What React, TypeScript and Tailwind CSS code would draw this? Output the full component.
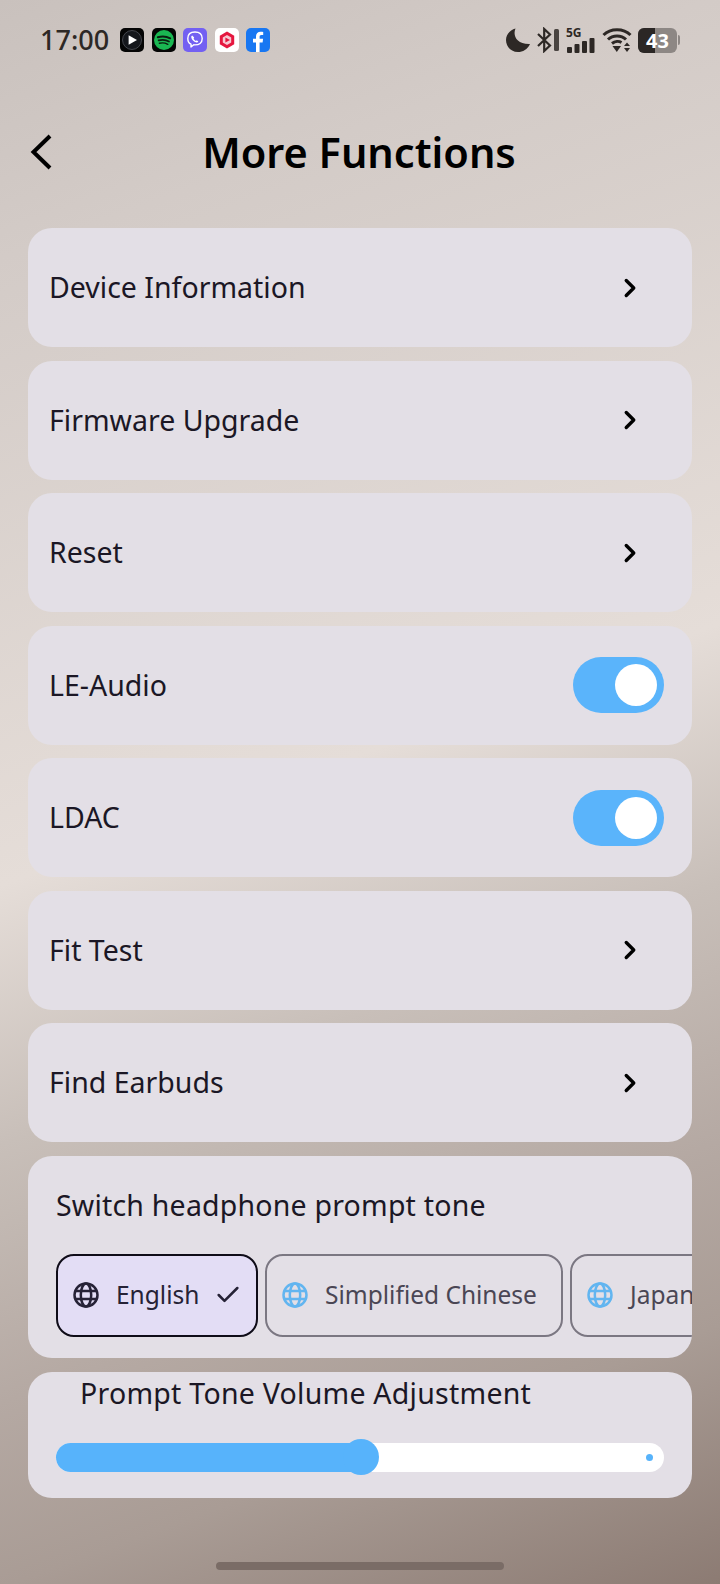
import { ChevronRight, Check } from 'lucide-react';

function PlayIcon() {
  return (
    <svg width="24" height="24" viewBox="0 0 24 24">
      <rect width="24" height="24" rx="5" fill="#050505" />
      <circle cx="12" cy="12" r="9.5" fill="#15171c" stroke="#5a5d66" strokeWidth="0.7" />
      <path d="M8.6 7.2 L17 12 L8.6 16.8 Z" fill="#fff" />
    </svg>
  );
}

function SpotifyIcon() {
  return (
    <svg width="24" height="24" viewBox="0 0 24 24">
      <rect width="24" height="24" rx="5" fill="#050505" />
      <circle cx="12" cy="12" r="10" fill="#1ed760" fillOpacity="0.85" />
      <path d="M5.8 9.2 C10 8 14.5 8.3 18.2 10.3" fill="none" stroke="#0a1f10" strokeWidth="2" strokeLinecap="round" />
      <path d="M6.6 12.4 C10 11.5 14 11.8 17 13.5" fill="none" stroke="#0a1f10" strokeWidth="1.7" strokeLinecap="round" />
      <path d="M7.4 15.3 C10.2 14.6 13.2 14.9 15.8 16.3" fill="none" stroke="#0a1f10" strokeWidth="1.4" strokeLinecap="round" />
    </svg>
  );
}

function ViberIcon() {
  return (
    <svg width="24" height="24" viewBox="0 0 24 24">
      <rect width="24" height="24" rx="5" fill="#7360f2" />
      <path
        d="M12 4 C7.5 4 4.8 6 4.8 10.5 C4.8 13.5 5.8 15.3 8 16.2 L8 19 L10.8 16.8 C16.5 17.1 19.2 15 19.2 10.5 C19.2 6 16.5 4 12 4 Z"
        fill="none"
        stroke="#fff"
        strokeWidth="1.4"
        strokeLinejoin="round"
      />
      <path
        d="M9.2 7.6 C8.2 8 8 9 8.5 10.2 C9.4 12.2 10.9 13.6 12.8 14.3 C14 14.7 15 14.4 15.3 13.5 L13.8 12.3 L12.9 12.9 C11.9 12.5 11 11.5 10.6 10.5 L11.2 9.6 Z"
        fill="#fff"
      />
    </svg>
  );
}

function VideoIcon() {
  return (
    <svg width="24" height="24" viewBox="0 0 24 24">
      <rect width="24" height="24" rx="5" fill="#fff" />
      <path d="M12 3.6 L19.2 7.8 L19.2 16.2 L12 20.4 L4.8 16.2 L4.8 7.8 Z" fill="#e5173f" />
      <path d="M12 7 L16.2 9.5 L16.2 14.5 L12 17 L7.8 14.5 L7.8 9.5 Z" fill="#f7c9d3" />
      <path d="M10.4 9.4 L15 12 L10.4 14.6 Z" fill="#e5173f" />
    </svg>
  );
}

function FacebookIcon() {
  return (
    <svg width="24" height="24" viewBox="0 0 24 24">
      <rect width="24" height="24" rx="5" fill="#1877f2" />
      <path
        d="M13.6 24 V14.4 H16.6 L17.1 10.8 H13.6 V8.8 C13.6 7.7 14 7 15.4 7 H17.2 V3.9 C16.6 3.8 15.6 3.7 14.6 3.7 C11.8 3.7 10 5.4 10 8.3 V10.8 H7 V14.4 H10 V24 Z"
        fill="#fff"
      />
    </svg>
  );
}

function StatusRight() {
  return (
    <div className="flex items-center text-[#2d2825]">
      <svg width="26" height="26" viewBox="0 0 26 26" className="mr-[5px]">
        <path d="M10.5 1.5 C7.5 8.5 11.5 17.5 25 17 C22.5 22.5 17.8 25 13 25 C6 25 1 19.5 1 13 C1 7.5 5 3 10.5 1.5 Z" fill="currentColor" />
      </svg>
      <svg width="24" height="26" viewBox="0 0 24 26" className="mr-[6px]">
        <path d="M2 7 L14 18.5 L8.2 24 V2 L14 7.5 L2 19" fill="none" stroke="currentColor" strokeWidth="2.2" />
        <rect x="18" y="2" width="5" height="22" rx="1.5" fill="#4a4441" />
      </svg>
      <div className="mr-[7px] flex h-[26px] w-[29px] flex-col">
        <span className="h-[11px] text-[12px] leading-[11px] font-bold font-['Noto_Sans',sans-serif]">5G</span>
        <svg width="29" height="15" viewBox="0 0 29 15" className="mt-auto">
          <rect x="1" y="9" width="5" height="6" rx="1" fill="currentColor" />
          <rect x="8.5" y="6" width="5" height="9" rx="1" fill="currentColor" />
          <rect x="16" y="3" width="5" height="12" rx="1" fill="currentColor" />
          <rect x="23.5" y="0" width="5" height="15" rx="1" fill="currentColor" />
        </svg>
      </div>
      <svg width="31" height="26" viewBox="0 0 31 26" className="mr-[5px]">
        <path d="M1.5 8 C8.5 1 21.5 1 28.5 8" fill="none" stroke="currentColor" strokeWidth="3" />
        <path d="M6 12.5 C10.8 7.8 19.2 7.8 24 12.5" fill="none" stroke="currentColor" strokeWidth="3" />
        <path d="M10 16.5 C13 14 17 14 19.5 15.5" fill="none" stroke="currentColor" strokeWidth="3" />
        <path d="M10.5 19 H19 L14.8 25 Z" fill="currentColor" />
        <path d="M22 19 L25 15.5 L28 19 Z M22 21 H28 L25 25 Z" fill="currentColor" />
      </svg>
      <div className="flex items-center">
        <div className="relative flex h-[25px] w-[39px] overflow-hidden rounded-[6px] bg-[#8d8784]">
          <div className="w-[17px] bg-[#2b2725]" />
          <span className="absolute inset-0 text-center text-[20px] leading-[25px] font-bold text-white font-['Noto_Sans',sans-serif]">43</span>
        </div>
        <div className="ml-px h-[10px] w-[2px] rounded-r-sm bg-[#8d8784]" />
      </div>
    </div>
  );
}

function MenuCard({ children }: { children: React.ReactNode }) {
  return (
    <div className="flex h-[119px] items-center justify-between rounded-[24px] bg-[#e3dfe6] pl-[21px] pr-[28px]">
      {children}
    </div>
  );
}

function LinkRow({ label }: { label: string }) {
  return (
    <MenuCard>
      <span className="text-[28.5px] text-[#1b1725]">{label}</span>
      <ChevronRight className="mr-[19px] h-[30px] w-[30px] text-black" strokeWidth={2.7} />
    </MenuCard>
  );
}

function ToggleRow({ label }: { label: string }) {
  return (
    <MenuCard>
      <span className="text-[28.5px] text-[#1b1725]">{label}</span>
      <div className="flex h-[56px] w-[91px] items-center justify-end rounded-full bg-[#5ab4fb] pr-[7px]">
        <div className="h-[42px] w-[42px] rounded-full bg-white" />
      </div>
    </MenuCard>
  );
}

function GlobeIcon({ className }: { className: string }) {
  return (
    <svg viewBox="0 0 26 26" className={className} fill="none" stroke="currentColor" strokeWidth="2.5">
      <circle cx="13" cy="13" r="11.5" />
      <ellipse cx="13" cy="13" rx="5.2" ry="11.5" />
      <path d="M2.5 9 H23.5 M2.5 17 H23.5" />
    </svg>
  );
}

const rows = [
  { label: 'Device Information', toggle: false },
  { label: 'Firmware Upgrade', toggle: false },
  { label: 'Reset', toggle: false },
  { label: 'LE-Audio', toggle: true },
  { label: 'LDAC', toggle: true },
  { label: 'Fit Test', toggle: false },
  { label: 'Find Earbuds', toggle: false },
];

export default function App() {
  return (
    <div className="flex h-[1584px] w-[720px] flex-col overflow-hidden bg-[linear-gradient(160deg,#c9c1bd_0%,#d3cbc7_14%,#e5ddd8_48%,#c8bfb9_62%,#b5a9a3_76%,#a99c95_86%,#8c7b73_100%)] font-['Noto_Sans',sans-serif]">
      {/* Status bar */}
      <div className="flex h-[26px] items-center justify-between mt-[27px] pl-[40px] pr-[40px]">
        <div className="flex items-center">
          <span className="mr-[11px] text-[27px] font-medium text-[#2d2825]">17:00</span>
          <div className="flex gap-[7.5px]">
            <PlayIcon />
            <SpotifyIcon />
            <ViberIcon />
            <VideoIcon />
            <FacebookIcon />
          </div>
        </div>
        <StatusRight />
      </div>

      {/* Header */}
      <div className="mt-[66px] grid h-[66px] grid-cols-[1fr_auto_1fr] items-center pl-[30px] pr-[32px]">
        <svg width="22" height="36" viewBox="0 0 22 36" fill="none" stroke="black" strokeWidth="4">
          <path d="M20 2 L3.5 18 L20 34" />
        </svg>
        <h1 className="text-[41.5px] font-semibold text-black">More Functions</h1>
        <div />
      </div>

      <div className="mt-[43px] flex flex-col gap-[13.5px] px-[28px]">
        {rows.map((r) =>
          r.toggle ? <ToggleRow key={r.label} label={r.label} /> : <LinkRow key={r.label} label={r.label} />
        )}

        {/* Prompt tone language */}
        <div className="h-[202px] overflow-hidden rounded-[24px] bg-[#e3dfe6] pl-[28px] pt-[29px]">
          <p className="text-[28.5px] leading-[40px] tracking-[0.2px] text-[#1b1725]">Switch headphone prompt tone</p>
          <div className="mt-[29px] flex gap-[7px] text-[24.5px] text-[#4a4654]">
            <div className="flex h-[83px] w-[202px] shrink-0 items-center rounded-[18px] border-2 border-[#0f0c18] bg-[#e3ddf5] pl-[15px] text-[#262236]">
              <GlobeIcon className="h-[26px] w-[26px]" />
              <span className="ml-[17px]">English</span>
              <Check className="ml-[15px] h-[28px] w-[28px]" strokeWidth={2.2} />
            </div>
            <div className="flex h-[83px] w-[298px] shrink-0 items-center rounded-[18px] border-2 border-[#7b7782] pl-[15px]">
              <GlobeIcon className="h-[26px] w-[26px] text-[#62b5f0]" />
              <span className="ml-[17px]">Simplified Chinese</span>
            </div>
            <div className="flex h-[83px] w-[200px] shrink-0 items-center rounded-[18px] border-2 border-[#7b7782] pl-[15px]">
              <GlobeIcon className="h-[26px] w-[26px] text-[#62b5f0]" />
              <span className="ml-[17px]">Japanese</span>
            </div>
          </div>
        </div>

        {/* Prompt tone volume */}
        <div className="mt-px h-[126px] rounded-[24px] bg-[#e3dfe6] px-[28px] pt-px">
          <p className="pl-[24px] text-[28.5px] leading-[40px] tracking-[0.25px] text-[#1b1725]">Prompt Tone Volume Adjustment</p>
          <div className="relative mt-[30px] flex h-[29px] w-[608px] items-center justify-end rounded-full bg-white pr-[11px]">
            <div className="absolute left-0 top-0 h-full w-[300px] rounded-l-full bg-[#57b3fb]" />
            <div className="absolute left-[287px] top-[-4px] h-[36px] w-[36px] rounded-full bg-[#57b3fb]" />
            <div className="h-[7px] w-[7px] rounded-full bg-[#57b3fb]" />
          </div>
        </div>
      </div>

      {/* Home indicator */}
      <div className="mx-auto mt-auto mb-[14px] h-[8px] w-[288px] rounded-full bg-[#7a6c66]" />
    </div>
  );
}
